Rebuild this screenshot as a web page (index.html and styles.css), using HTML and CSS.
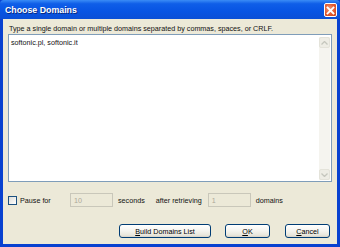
FILE: index.html
```html
<!DOCTYPE html>
<html lang="en">
<head>
    <meta charset="UTF-8">
    <title>Choose Domains</title>
    <link rel="stylesheet" href="styles.css">
</head>
<body>
  <div class="window">
    <div class="titlebar">
      <span class="title">Choose Domains</span>
      <span class="close">
        <svg width="9" height="9" viewBox="0 0 9 9">
          <path d="M1.5 1.5 L7.5 7.5 M7.5 1.5 L1.5 7.5" stroke="#fff" stroke-width="1.8" stroke-linecap="square"/>
        </svg>
      </span>
    </div>
    <div class="content">
      <p class="prompt">Type a single domain or multiple domains separated by commas, spaces, or CRLF.</p>
      <div class="editbox">
        <div class="edittext">softonic.pl, softonic.it</div>
        <div class="scrollbar">
          <div class="arrow">
            <svg width="7" height="4" viewBox="0 0 7 4"><path d="M0.5 3.5 L3.5 0.5 L6.5 3.5" fill="none" stroke="#c5c6bd" stroke-width="1.3"/></svg>
          </div>
          <div class="track"></div>
          <div class="arrow">
            <svg width="7" height="4" viewBox="0 0 7 4"><path d="M0.5 0.5 L3.5 3.5 L6.5 0.5" fill="none" stroke="#c5c6bd" stroke-width="1.3"/></svg>
          </div>
        </div>
      </div>
      <div class="options">
        <label class="check"><span class="box"></span>Pause for</label>
        <span class="field">10</span>
        <span class="unit">seconds</span>
        <span class="after">after retrieving</span>
        <span class="field">1</span>
        <span class="unit">domains</span>
      </div>
      <div class="buttons">
        <button class="btn btn-build"><u>B</u>uild Domains List</button>
        <button class="btn btn-ok"><u>O</u>K</button>
        <button class="btn btn-cancel"><u>C</u>ancel</button>
      </div>
    </div>
  </div>
</body>
</html>
```

FILE: styles.css
```css
*{
  box-sizing: border-box;
}
body{
  margin: 0;
  font-family: "Liberation Sans", Arial, sans-serif;
  font-size: 7.2px;
  color: #111;
}
.window{
  width: 340px;
  height: 247px;
  display: flex;
  flex-direction: column;
  background: #0841d0;
  padding: 0 3px 3px 3px;
}
.titlebar{
  height: 19px;
  margin: 0 -3px;
  padding: 0 3px 0 5px;
  display: flex;
  align-items: center;
  justify-content: space-between;
  background: linear-gradient(#3a8cf6 0%, #0f5ee8 20%, #0754e3 60%, #0a4fd6 100%);
  border-radius: 4px 4px 0 0;
}
.title{
  color: #fff;
  font-weight: bold;
  font-size: 8.8px;
  text-shadow: 1px 1px 0 #0a2a80;
}
.close{
  width: 13px;
  height: 14px;
  margin-top: 1px;
  display: flex;
  align-items: center;
  justify-content: center;
  background: radial-gradient(circle at 40% 40%, #f09a7c 0%, #e2592f 55%, #c8421b 100%);
  border: 1px solid #fff;
  border-radius: 2px;
}
.content{
  flex: 1;
  background: #ece9d8;
  display: flex;
  flex-direction: column;
  padding: 0 5px 0 5px;
}
.prompt{
  margin: 5px 0 0 1px;
  height: 10px;
  line-height: 10px;
}
.editbox{
  height: 148px;
  display: flex;
  background: #fff;
  border: 1px solid #7f9db9;
}
.edittext{
  flex: 1;
  padding: 3px 2px;
  line-height: 9px;
}
.scrollbar{
  width: 11px;
  margin: 2px 1px 1px 0;
  display: flex;
  flex-direction: column;
  background: #f5f4ef;
}
.scrollbar .track{
  flex: 1;
}
.scrollbar .arrow{
  height: 11px;
  display: flex;
  align-items: center;
  justify-content: center;
  background: #eeede5;
  border: 1px solid #e4e3da;
  border-radius: 2px;
}
.options{
  margin-top: 11px;
  height: 14px;
  display: flex;
  align-items: center;
}
.check{
  display: flex;
  align-items: center;
  width: 62px;
}
.box{
  width: 9px;
  height: 9px;
  margin-right: 3px;
  border: 1px solid #1c5180;
  background: linear-gradient(135deg, #dcdcd7, #fff);
}
.field{
  height: 14px;
  width: 43px;
  padding: 2px 3px;
  line-height: 9px;
  color: #aca899;
  border: 1px solid #c9c7ba;
  background: #ece9d8;
}
.unit{
  margin-left: 5px;
}
.after{
  margin-left: 11px;
  margin-right: 6px;
}
.buttons{
  margin-top: 17px;
  display: flex;
  justify-content: flex-end;
  gap: 14px;
  padding-right: 2px;
}
.btn{
  height: 14px;
  padding: 0;
  font-family: inherit;
  font-size: 7.2px;
  color: #000;
  border: 1px solid #003c74;
  border-radius: 3px;
  background: linear-gradient(#fff 0%, #f4f3ee 50%, #e8e6dc 85%, #d6d0c5 100%);
}
.btn-build{
  width: 92px;
}
.btn-ok,
.btn-cancel{
  width: 45px;
}
.btn-ok{
  margin-right: 1px;
}
```
